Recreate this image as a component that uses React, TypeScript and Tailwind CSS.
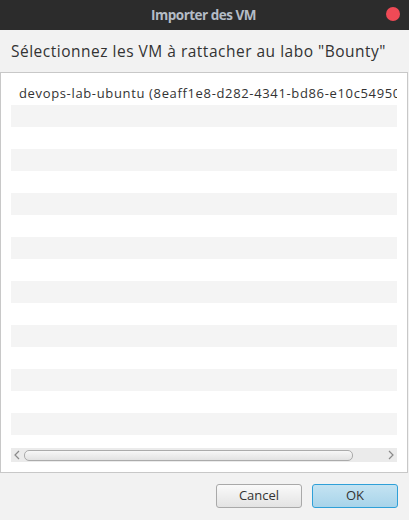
import React from "react";

const rows = Array.from({ length: 17 }, (_, i) => i);

export default function App() {
  return (
    <div className="w-[409px] h-[520px] flex flex-col bg-[#f2f2f2] overflow-hidden" style={{ fontFamily: '"Open Sans", "Noto Sans", sans-serif' }}>
      {/* Title bar */}
      <div className="relative h-[30px] bg-[#2c2c2c] flex items-center justify-center shrink-0">
        <span className="text-[13.5px] font-bold text-[#b4bcc6] tracking-[-0.5px] ml-[-2px]">Importer des VM</span>
        <span className="absolute right-[9px] top-[7px] w-[14px] h-[14px] rounded-full bg-[#ef4a56]" />
      </div>

      {/* Header */}
      <div className="h-[42px] shrink-0 flex items-center pl-[11px] pt-[2px]">
        <span className="text-[15.5px] text-[#333333] tracking-[0.5px]">Sélectionnez les VM à rattacher au labo "Bounty"</span>
      </div>

      {/* List box */}
      <div className="w-[408px] h-[401px] border border-[#c8c8c8] bg-white p-[10px] flex flex-col shrink-0">
        <div className="h-[365px] overflow-hidden flex flex-col shrink-0">
          {rows.map((i) => (
            <div
              key={i}
              className={`h-[22px] shrink-0 flex items-center pl-[8px] whitespace-nowrap text-[13px] text-[#333333] tracking-[0.65px] ${i % 2 === 1 ? "bg-[#f4f4f4]" : "bg-white"}`}
            >
              {i === 0 ? "devops-lab-ubuntu (8eaff1e8-d282-4341-bd86-e10c549503b2)" : ""}
            </div>
          ))}
        </div>
        {/* horizontal scrollbar */}
        <div className="h-[14px] bg-[#ebebeb] flex items-center shrink-0">
          <div className="w-[12px] flex items-center justify-center">
            <svg width="6" height="10" viewBox="0 0 6 10">
              <polyline points="5,1 1,5 5,9" fill="none" stroke="#8a8a8a" strokeWidth="1.2" />
            </svg>
          </div>
          <div className="ml-[1px] w-[329px] h-[11px] rounded-[5px] border border-[#ababab] bg-gradient-to-b from-[#f7f7f7] to-[#e2e2e2]" />
          <div className="flex-1" />
          <div className="w-[12px] flex items-center justify-center">
            <svg width="6" height="10" viewBox="0 0 6 10">
              <polyline points="1,1 5,5 1,9" fill="none" stroke="#8a8a8a" strokeWidth="1.2" />
            </svg>
          </div>
        </div>
      </div>

      {/* Buttons */}
      <div className="flex justify-end gap-[10px] pr-[11px] pt-[11px]">
        <button className="w-[86px] h-[24px] rounded-[3px] border border-[#a9a9a9] bg-gradient-to-b from-[#fafafa] to-[#e3e3e3] text-[13px] text-[#333333] flex items-center justify-center">
          Cancel
        </button>
        <button className="w-[86px] h-[24px] rounded-[3px] border border-[#2fa0d8] bg-gradient-to-b from-[#c4e3f2] to-[#a8d4ea] text-[13px] text-[#333333] flex items-center justify-center">
          OK
        </button>
      </div>
    </div>
  );
}
